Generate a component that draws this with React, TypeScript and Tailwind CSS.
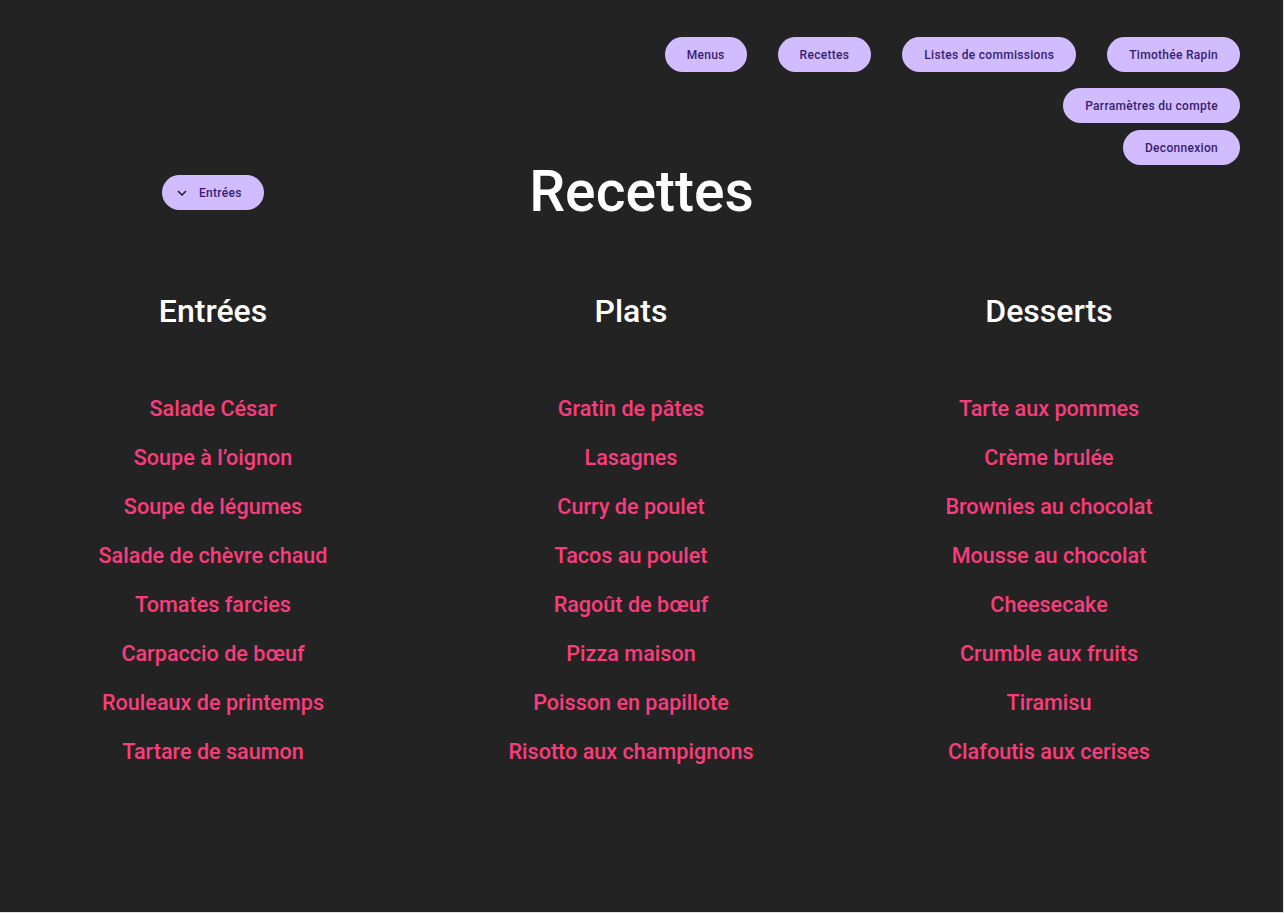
import React from "react";

const entrees = [
  "Salade César",
  "Soupe à l’oignon",
  "Soupe de légumes",
  "Salade de chèvre chaud",
  "Tomates farcies",
  "Carpaccio de bœuf",
  "Rouleaux de printemps",
  "Tartare de saumon",
];
const plats = [
  "Gratin de pâtes",
  "Lasagnes",
  "Curry de poulet",
  "Tacos au poulet",
  "Ragoût de bœuf",
  "Pizza maison",
  "Poisson en papillote",
  "Risotto aux champignons",
];
const desserts = [
  "Tarte aux pommes",
  "Crème brulée",
  "Brownies au chocolat",
  "Mousse au chocolat",
  "Cheesecake",
  "Crumble aux fruits",
  "Tiramisu",
  "Clafoutis aux cerises",
];

function Pill({ children, className = "" }: { children: React.ReactNode; className?: string }) {
  return (
    <button
      className={
        "h-[35px] rounded-full bg-[#d0bcff] px-[22px] text-[12px] font-medium leading-none tracking-[0.3px] text-[#381e72] " +
        className
      }
    >
      {children}
    </button>
  );
}

function Column({ title, items }: { title: string; items: string[] }) {
  return (
    <div className="flex flex-col items-center">
      <h2 className="text-[32px] font-medium leading-[40px] text-white">{title}</h2>
      <ul className="mt-[64px] flex flex-col items-center gap-[21px]">
        {items.map((it) => (
          <li key={it} className="text-[21.6px] font-medium leading-[28px] text-[#f93d7c]">
            {it}
          </li>
        ))}
      </ul>
    </div>
  );
}

export default function App() {
  return (
    <div className="h-[913px] w-[1284px] bg-[#e4e4e4]" style={{ fontFamily: "Roboto, 'Noto Sans', sans-serif" }}>
      <div className="h-[912px] w-[1283px] bg-[#232323]">
        <nav className="flex flex-col items-end pr-[43px] pt-[37px]">
          <div className="flex gap-[31px]">
            <Pill>Menus</Pill>
            <Pill>Recettes</Pill>
            <Pill>Listes de commissions</Pill>
            <Pill>Timothée Rapin</Pill>
          </div>
          <Pill className="mt-[16px]">Parramètres du compte</Pill>
          <Pill className="mt-[7px]">Deconnexion</Pill>
        </nav>

        <div className="relative mt-[-5px] flex h-[64px] items-center justify-center">
          <div className="absolute left-[162px] top-[15px]">
            <button className="flex h-[35px] items-center gap-[8px] rounded-full bg-[#d0bcff] pl-[11px] pr-[22px] text-[12px] font-medium leading-none tracking-[0.3px] text-[#381e72]">
              <svg width="18" height="18" viewBox="0 0 24 24" fill="#1d1b20">
                <path d="M16.59 8.59L12 13.17 7.41 8.59 6 10l6 6 6-6z" />
              </svg>
              Entrées
            </button>
          </div>
          <h1 className="text-[57px] font-medium leading-[64px] text-white">Recettes</h1>
        </div>

        <div className="ml-[4px] mt-[67px] grid w-[1254px] grid-cols-3">
          <Column title="Entrées" items={entrees} />
          <Column title="Plats" items={plats} />
          <Column title="Desserts" items={desserts} />
        </div>
      </div>
    </div>
  );
}
